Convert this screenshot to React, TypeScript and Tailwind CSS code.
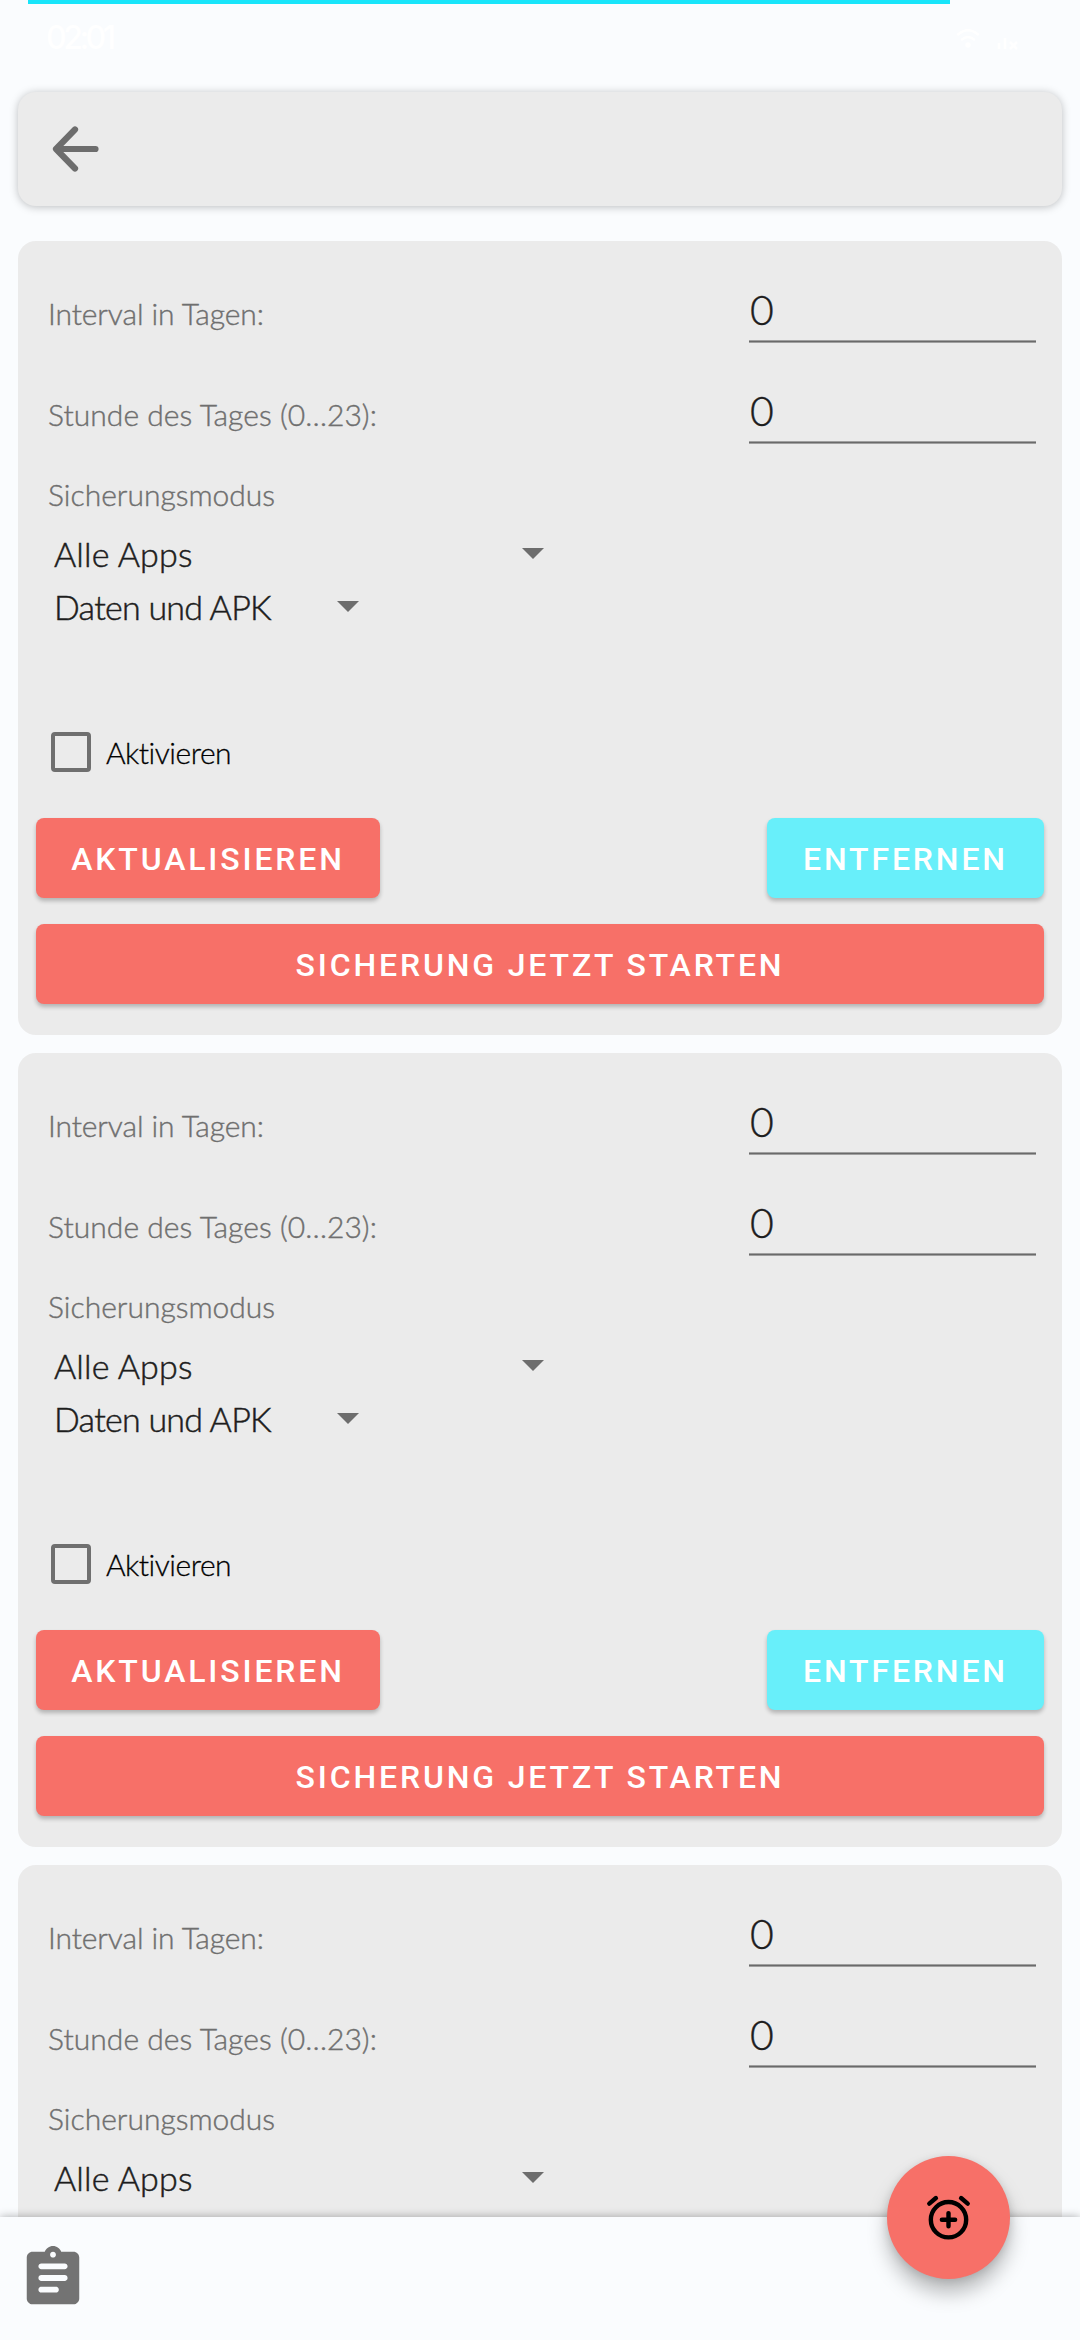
import React from "react";

function Caret() {
  return (
    <svg className="block h-[11px] w-[22px]" viewBox="0 0 22 11" fill="#6d6d6d">
      <path d="M0 0h22L11 11z" />
    </svg>
  );
}

function NumberRow({ label, spacing }: { label: string; spacing: string }) {
  return (
    <div className="flex h-[101px] items-start justify-between pr-[26px] pl-[30px]">
      <span className={`mt-[32px] text-[30px] leading-[40px] font-light text-[#6f6f6f] [-webkit-text-stroke:0.4px_#6f6f6f] ${spacing}`}>{label}</span>
      <div className="mt-[13px] flex h-[69px] w-[287px] flex-col justify-between">
        <span className="pt-[6px] pl-px text-[41px] leading-[60px] font-light text-[#1d1d1d] [-webkit-text-stroke:0.4px_#1d1d1d]">0</span>
        <div className="h-[3px] shrink-0 border-y border-[#a0a0a0] bg-[#6a6a6a]" />
      </div>
    </div>
  );
}

function Button({ children, className }: { children: string; className: string }) {
  return (
    <button
      className={`flex h-[80px] items-center justify-center rounded-[8px] pt-px font-[Roboto] text-[32px] leading-[40px] font-medium tracking-[2.85px] whitespace-nowrap text-white shadow-[0_3px_4px_rgba(0,0,0,0.24)] ${className}`}
    >
      {children}
    </button>
  );
}

function ScheduleCard({ partial = false }: { partial?: boolean }) {
  return (
    <section className="h-[794px] shrink-0 rounded-[18px] bg-[#ebebeb] pt-[20px]">
      <NumberRow label="Interval in Tagen:" spacing="tracking-[-0.1px]" />
      <NumberRow label="Stunde des Tages (0…23):" spacing="tracking-[0.05px]" />
      <div className="flex h-[64px] items-start pl-[30px]">
        <span className="mt-[11px] text-[30px] leading-[40px] font-light text-[#6f6f6f] [-webkit-text-stroke:0.4px_#6f6f6f]">Sicherungsmodus</span>
      </div>
      <div className="flex h-[53px] w-[526px] items-center justify-between pl-[36px]">
        <span className="text-[34px] leading-[53px] font-light tracking-[0.15px] text-[#1d1d1d] [-webkit-text-stroke:0.5px_#1d1d1d]">Alle Apps</span>
        <Caret />
      </div>
      {!partial && (
        <>
          <div className="flex h-[53px] w-[341px] items-center justify-between pl-[36px]">
            <span className="text-[34px] leading-[53px] font-light tracking-[-0.75px] text-[#1d1d1d] [-webkit-text-stroke:0.5px_#1d1d1d]">Daten und APK</span>
            <Caret />
          </div>
          <div className="mt-[98px] flex h-[41px] items-center pl-[33px]">
            <div className="h-[40px] w-[40px] rounded-[4px] border-4 border-[#6f6f6f]" />
            <span className="ml-[15px] text-[30px] leading-[40px] font-light tracking-[-0.5px] text-black [-webkit-text-stroke:0.3px_#000]">Aktivieren</span>
          </div>
          <div className="mt-[46px] flex justify-between px-[18px]">
            <Button className="w-[344px] bg-[#f77068]">AKTUALISIEREN</Button>
            <Button className="w-[277px] bg-[#68effa]">ENTFERNEN</Button>
          </div>
          <div className="mt-[26px] px-[18px]">
            <Button className="w-full bg-[#f77068]">SICHERUNG JETZT STARTEN</Button>
          </div>
        </>
      )}
    </section>
  );
}

function StatusBar() {
  return (
    <header className="h-[92px] shrink-0">
      <div className="ml-[28px] h-[4px] w-[922px] bg-[#18e5fa]" />
      <div className="flex h-[68px] items-center justify-between pr-[60px] pl-[46px]">
        <span className="font-[Inter] text-[32px] leading-[40px] font-medium tracking-[-3.5px] text-white">02:01</span>
        <div className="flex items-center gap-[14px]">
          <svg className="h-[26px] w-[28px]" viewBox="0 0 28 26" fill="none" stroke="#fff" strokeWidth="2.4" strokeLinecap="round">
            <path d="M4 9.500Q14 1 24 9.500M8 14.500Q14 9.500 20 14.500" />
            <circle cx="14" cy="20" r="1.500" fill="#fff" />
          </svg>
          <svg className="h-[26px] w-[24px]" viewBox="0 0 24 26" fill="none" stroke="#fff" strokeWidth="2.500">
            <path d="M3 18v6M9 13v11M14 17l7 7M21 17l-7 7" />
          </svg>
        </div>
      </div>
    </header>
  );
}

export default function App() {
  return (
    <div className="relative flex h-[2340px] w-[1080px] flex-col overflow-hidden bg-[#fafcfe] font-[Lato,sans-serif]">
      <StatusBar />
      <nav className="mx-[18px] flex h-[114px] shrink-0 items-center rounded-[18px] bg-[#ebebeb] pl-[34px] shadow-[0_1px_8px_rgba(0,0,0,0.25)]">
        <svg className="h-[46px] w-[48px]" viewBox="0 0 48 46" fill="none" stroke="#6d6d6d" strokeWidth="6.200" strokeLinecap="round" strokeLinejoin="round">
          <path d="M43.500 23H5M23 3.500L4 23l19 19.500" />
        </svg>
      </nav>
      <main className="mt-[35px] flex h-[1976px] shrink-0 flex-col gap-[18px] overflow-hidden px-[18px]">
        <ScheduleCard />
        <ScheduleCard />
        <ScheduleCard partial />
      </main>
      <footer className="relative flex h-[123px] shrink-0 items-start bg-[#fafcfe] pt-[26px] pl-[18px] shadow-[0_0_9px_rgba(0,0,0,0.32)]">
        <svg className="h-[70px] w-[70px]" viewBox="0 0 24 24" fill="#737373">
          <path d="M19 3h-4.180C14.400 1.840 13.300 1 12 1s-2.400.84-2.820 2H5c-1.100 0-2 .9-2 2v14c0 1.100.9 2 2 2h14c1.100 0 2-.9 2-2V5c0-1.100-.9-2-2-2zm-7 0c.55 0 1 .45 1 1s-.45 1-1 1-1-.45-1-1 .45-1 1-1zm1 14H8c-.55 0-1-.45-1-1s.45-1 1-1h5c.55 0 1 .45 1 1s-.45 1-1 1zm3-4H8c-.55 0-1-.45-1-1s.45-1 1-1h8c.55 0 1 .45 1 1s-.45 1-1 1zm0-4H8c-.55 0-1-.45-1-1s.45-1 1-1h8c.55 0 1 .45 1 1s-.45 1-1 1z" />
        </svg>
        <button className="absolute top-[-61px] left-[887px] flex h-[123px] w-[123px] items-center justify-center rounded-full bg-[#f77068] shadow-[0_14px_20px_rgba(0,0,0,0.26),0_2px_8px_rgba(0,0,0,0.12)]">
          <svg className="h-[53px] w-[53px]" viewBox="0 0 24 24" fill="none" stroke="#000" strokeWidth="2" strokeLinecap="round">
            <circle cx="12" cy="13" r="8" />
            <path d="M12 10v6M9 13h6M3.300 5.700L6.300 3.200M20.700 5.700L17.700 3.200" />
          </svg>
        </button>
      </footer>
    </div>
  );
}
